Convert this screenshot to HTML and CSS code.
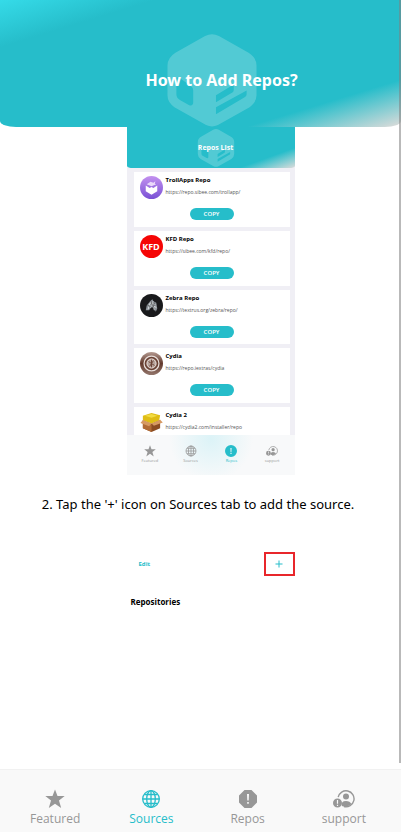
FILE: index.html
```html
<!DOCTYPE html>
<html lang="en">
<head>
<meta charset="utf-8">
<meta name="viewport" content="width=device-width, initial-scale=1">
<title>How to Add Repos?</title>
<link rel="stylesheet" href="styles.css">
</head>
<body>
<svg class="defs" aria-hidden="true">
  <symbol id="logo" viewBox="0 0 90 94">
    <path fill-rule="evenodd" d="M38 2Q45 -1.500 52 2L82 19Q90 24 90 32V62Q90 69 83 74L51 92Q45 95 39 92L7 74Q0 69 0 62V32Q0 24 8 19ZM9 45V61Q9 65 13 67L22 72Q26 73 26 69V57Q26 54 23 52L13 45Q9 43 9 45ZM49 62V69L66 59Q67 58 67 56V51ZM49 74V81L78 64Q80 63 80 61V57Z"/>
  </symbol>
  <symbol id="star" viewBox="0 0 20 20">
    <path d="M10 0.500L12.500 7H19.700L14 11.500L16.200 19L10 14.700L3.800 19L6 11.500L0.300 7H7.500Z"/>
  </symbol>
  <symbol id="globe" viewBox="0 0 20 20">
    <g fill="none" stroke="currentColor" stroke-width="1.300"><circle cx="10" cy="10" r="8.300"/><ellipse cx="10" cy="10" rx="4.300" ry="8.300"/><path d="M10 1.700V18.300M1.700 10H18.300M3.300 5.500H16.700M3.300 14.500H16.700"/></g>
  </symbol>
  <symbol id="alert" viewBox="0 0 20 20">
    <path fill-rule="evenodd" d="M6.500 1H13.500L19 6.500V13.500L13.500 19H6.500L1 13.500V6.500ZM9 5L9.300 11.500H10.700L11 5ZM9.200 13V14.800H10.800V13Z"/>
  </symbol>
  <symbol id="alert-round" viewBox="0 0 20 20">
    <path fill-rule="evenodd" d="M10 0A10 10 0 1 1 10 20A10 10 0 1 1 10 0ZM9 5L9.300 11.500H10.700L11 5ZM9 13V15H11V13Z"/>
  </symbol>
  <symbol id="support" viewBox="0 0 22 20">
    <path d="M5.200 8.200A8 8 0 1 1 11 17.500" fill="none" stroke="currentColor" stroke-width="1.400"/>
    <circle cx="13" cy="7.500" r="3"/>
    <path d="M8.800 17Q7.800 12 13 12Q17 12 18.400 15Q14 19 8.800 17Z"/>
    <path fill-rule="evenodd" d="M4.500 9.500A4.500 4.500 0 1 1 4.500 18.500A4.500 4.500 0 1 1 4.500 9.500ZM3.900 11V14.700H5.100V11ZM3.900 15.800V17H5.100V15.800Z"/>
  </symbol>
</svg>

<header class="header">
  <svg class="header-logo"><use href="#logo"/></svg>
  <h1>How to Add Repos?</h1>
</header>

<main class="content">
  <section class="phone">
    <div class="phone-header">
      <svg class="phone-logo"><use href="#logo"/></svg>
      <h2>Repos List</h2>
    </div>
    <div class="repos">
      <article class="repo">
        <svg class="avatar" viewBox="0 0 24 24"><defs><linearGradient id="violet" x2="0" y2="1"><stop stop-color="#c391ef"/><stop offset="1" stop-color="#7951d5"/></linearGradient></defs><circle cx="12" cy="12" r="12" fill="url(#violet)"/><path d="M6 10L10 12.500L12 11.500L14 12.500L18 10V16L12 19.500L6 16Z" fill="#fff"/><path d="M7 8.500L11 6L14 7L16 5.500L15.500 8L17 8.500L12 10.800Z" fill="#ead9fa"/></svg>
        <div class="repo-text"><h3>TrollApps Repo</h3><p>https://repo.sibee.com/trollapp/</p></div>
        <button class="copy">COPY</button>
      </article>
      <article class="repo">
        <div class="avatar kfd">KFD</div>
        <div class="repo-text"><h3>KFD Repo</h3><p>https://sibee.com/kfd/repo/</p></div>
        <button class="copy">COPY</button>
      </article>
      <article class="repo">
        <svg class="avatar" viewBox="0 0 24 24"><circle cx="12" cy="12" r="12" fill="#191a1c"/><path d="M6 17L7 12L11 7L13 5.500L14 7.500L17 9L18 15L16.500 18.500L14.500 14L11.500 14L9.500 17Z" fill="#8b9298"/><path d="M8.500 16L10 10L14 8M11 14L12.500 10L16 11M15 17L14 12.500L17 14" fill="none" stroke="#d7dde0" stroke-width="1"/><path d="M8 12L11 13M12 8L12.500 12M15 9L14 14" stroke="#333" stroke-width="0.700"/></svg>
        <div class="repo-text"><h3>Zebra Repo</h3><p>https://textrus.org/zebra/repo/</p></div>
        <button class="copy">COPY</button>
      </article>
      <article class="repo">
        <svg class="avatar" viewBox="0 0 24 24"><defs><linearGradient id="brown" x2="0" y2="1"><stop stop-color="#b49a91"/><stop offset="0.500" stop-color="#62392c"/><stop offset="1" stop-color="#94776d"/></linearGradient></defs><circle cx="12" cy="12" r="12" fill="url(#brown)"/><circle cx="12" cy="12" r="7.800" fill="#6a4235" stroke="#e8dfdb" stroke-width="1.300"/><circle cx="12" cy="12" r="4.800" fill="#b7a39b" stroke="#efe8e5" stroke-width="1"/><path d="M9 10L15 14M10 15L14 9M12 8V16" stroke="#6a4235" stroke-width="1"/></svg>
        <div class="repo-text"><h3>Cydia</h3><p>https://repo.iextras/cydia</p></div>
        <button class="copy">COPY</button>
      </article>
      <article class="repo">
        <svg class="avatar" viewBox="0 0 24 24"><path d="M3 10L12 13L21 9V18L12 22L3 18Z" fill="#8b4c22"/><path d="M3 10L12 14V22L3 18Z" fill="#b16b35"/><path d="M3 5L12 2L21 4.500L20 10L12 13L3 10Z" fill="#dfbd16"/><path d="M5 5L12 3L18 5L12 7Z" fill="#f3dc42"/><path d="M3 9.500L0.500 12.500L9.500 16L12 13ZM21 9L23.800 12L14.500 15.500L12 13Z" fill="#d69962"/></svg>
        <div class="repo-text"><h3>Cydia 2</h3><p>https://cydia2.com/installer/repo</p></div>
        <button class="copy">COPY</button>
      </article>
    </div>
    <nav class="phone-tabs" aria-label="Example tabs">
      <a href="#"><svg><use href="#star"/></svg>Featured</a>
      <a href="#"><svg><use href="#globe"/></svg>Sources</a>
      <a href="#" class="active"><svg><use href="#alert-round"/></svg>Repos</a>
      <a href="#"><svg><use href="#support"/></svg>support</a>
    </nav>
  </section>

  <p class="step">2. Tap the '+' icon on Sources tab to add the source.</p>

  <section class="sources">
    <div class="sources-bar">
      <button class="edit">Edit</button>
      <button class="add" aria-label="Add"><svg viewBox="0 0 8 8"><path d="M4 0.500V7.500M0.500 4H7.500" stroke="currentColor" stroke-width="1"/></svg></button>
    </div>
    <h2>Repositories</h2>
  </section>
</main>

<div class="scroll-thumb"></div>

<nav class="tabs" aria-label="Main">
  <a href="#"><svg><use href="#star"/></svg>Featured</a>
  <a href="#" class="active"><svg><use href="#globe"/></svg>Sources</a>
  <a href="#"><svg><use href="#alert"/></svg>Repos</a>
  <a href="#"><svg><use href="#support"/></svg>support</a>
</nav>
</body>
</html>
```
FILE: styles.css
```css
* { box-sizing: border-box; }

body {
  --teal: #26bdca;
  --grey: #979797;
  margin: 0;
  min-height: 100vh;
  display: flex;
  flex-direction: column;
  position: relative;
  background: #fff;
  color: #000;
  font-family: "Open Sans", "Noto Sans", sans-serif;
}

h1, h2, h3, p { margin: 0; }
a { text-decoration: none; }
button { border: 0; padding: 0; font-family: inherit; background: none; }
svg { display: block; fill: currentColor; }
.defs { position: absolute; width: 0; height: 0; }

.header {
  height: 127px;
  display: grid;
  align-items: end;
  justify-items: center;
  padding-left: 22px;
  border-radius: 0 0 16px 16px / 0 0 6px 6px;
  background: linear-gradient(163deg, #35dbe8, var(--teal) 19%, var(--teal) 81%, #e0dcda);
  color: #fff;
}
.header > * { grid-area: 1 / 1; }
.header-logo { width: 90px; height: 93px; opacity: .2; }
.header h1 { font-family: "Noto Sans", sans-serif; font-size: 16px; line-height: 24px; padding: 0 0 35px 20px; }

.content {
  flex: 1;
  display: flex;
  flex-direction: column;
  align-items: center;
  padding-left: 20px;
}

.phone {
  width: 168px;
  height: 348px;
  position: relative;
  overflow: hidden;
  background: #f0eff5;
}
.phone-header {
  height: 41px;
  display: grid;
  place-items: center;
  padding-left: 10px;
  border-radius: 0 0 6px 6px / 0 0 2px 2px;
  background: linear-gradient(160deg, var(--teal) 80%, #dcdcdb);
  color: #fff;
}
.phone-header > * { grid-area: 1 / 1; }
.phone-logo { width: 38px; height: 38px; opacity: .2; }
.phone-header h2 { font-size: 7px; line-height: 10px; }

.repos {
  height: 298px;
  display: grid;
  grid-auto-rows: 1fr;
  gap: 4px;
  padding: 4px 5px 4px 7px;
}
.repo {
  display: grid;
  grid-template-columns: 24px 1fr;
  grid-template-rows: 32px 12px;
  column-gap: 2px;
  padding: 4px 6px;
  background: #fff;
}
.avatar { width: 23px; height: 23px; }
.kfd {
  border-radius: 50%;
  background: #f50505;
  color: #fff;
  font-size: 9px;
  font-weight: 700;
  line-height: 23px;
  text-align: center;
}
.repo h3 { font-size: 6px; line-height: 8px; }
.repo p { font-size: 5px; line-height: 8px; padding-top: 4px; color: #555; white-space: nowrap; }
.copy {
  grid-column: 1 / -1;
  justify-self: center;
  width: 44px;
  height: 12px;
  border-radius: 6px;
  background: var(--teal);
  color: #fff;
  font-size: 6px;
  font-weight: 600;
  line-height: 12px;
}

.phone-tabs {
  position: absolute;
  inset: auto 0 0;
  height: 40px;
  display: grid;
  grid-template-columns: repeat(4, 1fr);
  padding: 10px 2px 0 3px;
  background: radial-gradient(circle at 50% 10%, #dcf3f7 0, #f8f9fa 42px);
}
.phone-tabs a {
  display: flex;
  flex-direction: column;
  align-items: center;
  gap: 1px;
  color: var(--grey);
  font-size: 4px;
  line-height: 6px;
}
.phone-tabs svg { width: 12px; height: 12px; }

.step {
  padding: 19px 25px 0 0;
  font-family: "Noto Sans", sans-serif;
  font-size: 13px;
  line-height: 20px;
  white-space: nowrap;
}

.sources { width: 168px; padding-top: 38px; }
.sources-bar { display: flex; justify-content: space-between; align-items: center; padding-left: 12px; }
.edit { color: var(--teal); font-size: 6px; font-weight: 700; line-height: 8px; }
.add {
  width: 31px;
  height: 24px;
  display: grid;
  place-items: center;
  border: 2px solid #e8262b;
  color: var(--teal);
}
.add svg { width: 8px; height: 8px; }
.sources h2 { padding: 20px 0 0 4px; font-size: 8px; line-height: 12px; }

.scroll-thumb {
  position: absolute;
  inset: 0 0 69px auto;
  width: 2px;
  background: rgba(128, 128, 128, .55);
}

.tabs {
  height: 63px;
  display: grid;
  grid-template-columns: repeat(4, 1fr);
  padding: 19px 9px 0 7px;
  border-top: 1px solid #f1f1f1;
  background: #f9f9f9;
}
.tabs a {
  display: flex;
  flex-direction: column;
  align-items: center;
  color: var(--grey);
  font-size: 12px;
  line-height: 20px;
}
.tabs svg { width: 22px; height: 20px; }
.tabs .active, .phone-tabs .active { color: var(--teal); }
```
